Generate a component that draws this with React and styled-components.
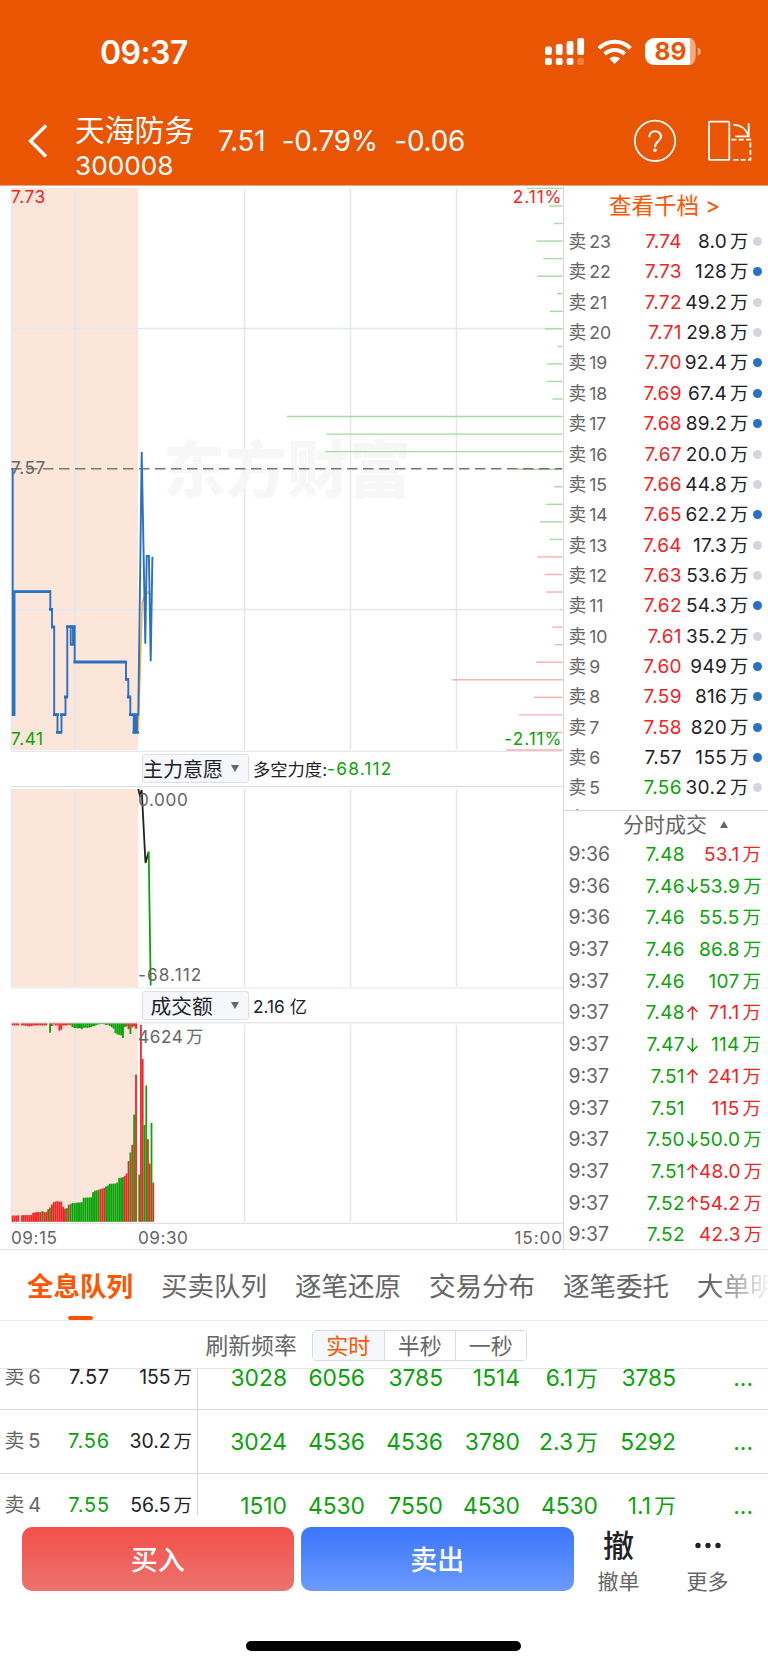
import React from 'react';
import styled, { createGlobalStyle } from 'styled-components';

const RED = '#f52223';
const GREEN = '#0aa30a';
const DARK = '#222226';
const GREY = '#666';
const BLUE = '#2a70c4';
const ORANGE = '#ff5500';
const GRID = '#e3e7ef';
const FONT = '"Inter", "Noto Sans CJK SC", sans-serif';

const GlobalStyle = createGlobalStyle`
  * {
    box-sizing: border-box;
  }
  body {
    margin: 0;
    background: #fff;
    font-family: ${FONT};
    color: ${DARK};
  }
`;

const Screen = styled.div`
  width: 768px;
  height: 1665px;
  overflow: hidden;
  display: flex;
  flex-direction: column;
  background: #fff;
`;

const Header = styled.header`
  height: 186px;
  flex: none;
  background: #ea5504;
  border-bottom: 1px solid #e3a88c;
  color: #fff;
`;

const StatusBar = styled.div`
  display: flex;
  align-items: center;
  justify-content: space-between;
  height: 104px;
  padding: 0 66px 0 100px;
`;

const Clock = styled.div`
  font-size: 32px;
  font-weight: 600;
  letter-spacing: -0.6px;
`;

const StatusIcons = styled.svg`
  display: block;
  width: 158px;
  height: 30px;
`;

const TitleBar = styled.div`
  display: flex;
  align-items: center;
  height: 74px;
  padding-left: 28px;
  padding-right: 16px;
`;

const BackIcon = styled.svg`
  width: 20px;
  height: 34px;
`;

const StockName = styled.div`
  width: 143px;
  margin-left: 27px;
  padding-top: 13px;
  font-size: 29.8px;
  line-height: 36px;
  white-space: nowrap;
`;

const StockCode = styled.div`
  font-size: 26.2px;
  line-height: 35px;
`;

const Quote = styled.div`
  display: flex;
  flex: 1;
  gap: 16.5px;
  font-size: 27.8px;
  letter-spacing: -0.2px;
`;

const HeaderIcons = styled.svg`
  width: 120px;
  height: 44px;
`;

const Market = styled.main`
  display: flex;
  height: 1064px;
  flex: none;
  border-bottom: 1px solid #e0e0e3;
`;

const Charts = styled.section`
  width: 564px;
  flex: none;
  display: flex;
  flex-direction: column;
  border-right: 1px solid #d4d7dd;
`;

const Chart = styled.svg`
  display: block;
  flex: none;
  width: 563px;
  height: ${(props) => props.$height}px;

  text {
    font-family: ${FONT};
    font-size: 17.2px;
    letter-spacing: 0.6px;
  }
`;

const IndicatorBar = styled.div`
  display: flex;
  align-items: center;
  height: 34px;
  padding-left: 142px;
  font-size: 17.3px;
  white-space: nowrap;
`;

const IndicatorSelect = styled.div`
  display: flex;
  align-items: center;
  justify-content: space-between;
  width: 107px;
  height: 29px;
  margin-right: 4px;
  padding: 0 9px 0 ${(props) => props.$indent}px;
  border: 1px solid #dcdfe5;
  border-radius: 3px;
  background: #f5f7fa;
  font-size: ${(props) => props.$size || 20}px;
`;

const Caret = styled.span`
  width: 0;
  height: 0;
  border: 4.5px solid transparent;
  ${(props) => (props.$up ? 'border-top-width: 0' : 'border-bottom-width: 0')};
  border-${(props) => (props.$up ? 'bottom' : 'top')}: 7px solid ${GREY};
`;

const Tinted = styled.span`
  color: ${(props) => props.$color};
  letter-spacing: 1.2px;
`;

const TimeAxis = styled.div`
  display: flex;
  height: 25px;
  padding: 0 0 0 11px;
  font-size: 17.2px;
  line-height: 27px;
  letter-spacing: 0.5px;
  color: ${GREY};

  span:first-child {
    width: 127px;
  }
  span:last-child {
    margin-left: auto;
    letter-spacing: 0.9px;
  }
`;

const SidePanel = styled.aside`
  flex: 1;
  min-width: 0;
`;

const DepthLink = styled.div`
  height: 40px;
  padding: 2px 0 0 45px;
  font-size: 22.5px;
  line-height: 36px;
  color: ${ORANGE};
`;

const DepthList = styled.div`
  height: 585px;
  overflow: hidden;
  border-bottom: 1px solid #d4d7dd;
`;

const DepthRow = styled.div`
  display: grid;
  grid-template-columns: 50px 63.5px 66.5px 1fr;
  align-items: center;
  height: 30.36px;
  padding-left: 4.5px;
  font-size: 19px;
  line-height: 31px;
  white-space: nowrap;
`;

const Level = styled.span`
  font-size: ${(props) => props.$size || 17.7}px;
  color: ${GREY};
  word-spacing: -2px;
`;

const Price = styled.span`
  color: ${(props) => props.$color};
  text-align: right;
  letter-spacing: 0.4px;
`;

const Amount = styled.span`
  color: ${(props) => props.$color || DARK};
  text-align: right;
  letter-spacing: 0.3px;
`;

const Unit = styled.span`
  margin-left: 3px;
  font-size: ${(props) => props.$size || 18.4}px;
  line-height: 1;
  letter-spacing: 0;
`;

const Dot = styled.i`
  width: 9px;
  height: 9px;
  margin-left: 4px;
  border-radius: 50%;
  background: ${(props) => (props.$active ? BLUE : '#d3d6de')};
`;

const TradesTitle = styled.div`
  display: flex;
  align-items: center;
  gap: 13px;
  height: 27px;
  padding-left: 59px;
  font-size: 21px;
  line-height: 27px;
  color: ${GREY};
`;

const TradeRow = styled.div`
  display: grid;
  grid-template-columns: 60px 56.5px 14px 62px;
  align-items: center;
  height: 31.7px;
  padding-left: 4.5px;
  font-size: 19px;
  line-height: 33px;
  white-space: nowrap;
`;

const ArrowIcon = styled.svg`
  display: block;
  width: 13px;
  height: 16px;
  margin-left: 0.5px;
  overflow: visible;
`;

const Tabs = styled.nav`
  display: flex;
  flex: none;
  gap: 28px;
  height: 71px;
  padding-left: 27px;
  overflow: hidden;
  border-bottom: 1px solid #e9ebf1;
`;

const Tab = styled.div`
  display: flex;
  flex: none;
  flex-direction: column;
  align-items: center;
  justify-content: space-between;
  width: 106px;
  padding-top: 16px;
  font-size: 26.5px;
  line-height: 40px;
  font-weight: ${(props) => (props.$active ? 600 : 400)};
  color: ${(props) => (props.$active ? ORANGE : GREY)};
  white-space: nowrap;

  &::after {
    content: '';
    width: 25px;
    height: 4px;
    border-radius: 2px;
    background: ${(props) => (props.$active ? ORANGE : 'transparent')};
  }

  &:last-child {
    mask-image: linear-gradient(90deg, #000 12px, transparent 76px);
  }
`;

const RefreshBar = styled.div`
  display: flex;
  align-items: center;
  flex: none;
  height: 48px;
  padding-left: 205.5px;
  border-bottom: 1px solid #e4e6eb;
  font-size: 22.8px;
  color: ${GREY};
`;

const Segments = styled.div`
  display: flex;
  height: 31px;
  margin-top: 1px;
  margin-left: 15.5px;
  border: 1px solid #d9dce3;
  border-radius: 4px;
  overflow: hidden;
`;

const Segment = styled.div`
  width: 71px;
  padding-right: 1px;
  font-size: 22px;
  line-height: 30px;
  text-align: center;
  background: ${(props) => (props.$active ? '#f5f7fa' : '#fff')};
  color: ${(props) => (props.$active ? ORANGE : GREY)};

  & + & {
    border-left: 1px solid #d9dce3;
  }
`;

// The list is scrolled part way through its first row
const QueueTable = styled.div`
  display: flex;
  flex-direction: column;
  justify-content: flex-start;
  height: 146px;
  flex: none;
  overflow: hidden;
`;

const QueueRow = styled.div`
  display: grid;
  flex: none;
  grid-template-columns: 50px 60px 88px 89px 78px 78px 77px 78px 78px 77px;
  height: 64px;
  border-bottom: 1px solid #d9dbe1;
  font-size: 22.8px;
  line-height: 63px;
  white-space: nowrap;

  &:first-child {
    margin-top: -23px;
  }
`;

const QueueCell = styled.div`
  text-align: right;
  color: ${GREEN};
`;

const QueueLevel = styled(QueueCell)`
  padding-left: 4.5px;
  text-align: left;
  font-size: 20px;
  color: ${GREY};
  word-spacing: -2px;
`;

const QueuePrice = styled(QueueCell)`
  font-size: 20px;
  letter-spacing: 0.8px;
  color: ${(props) => props.$color};
`;

const QueueAmount = styled(QueueCell)`
  padding-right: 5px;
  border-right: 1px solid #d3d6dc;
  font-size: 19.4px;
  color: ${DARK};
`;

const ActionBar = styled.footer`
  display: flex;
  align-items: flex-start;
  flex: none;
  height: 88px;
  padding: 12px 12px 0 21.5px;
`;

const TradeButton = styled.button`
  width: 272.5px;
  height: 64px;
  margin-right: 7px;
  padding: 0 0 2px;
  border: 0;
  border-radius: 10px;
  background: ${(props) => props.$fill};
  color: #fff;
  font-family: ${FONT};
  font-size: 27px;
  font-weight: 500;
`;

const ToolButton = styled.div`
  display: flex;
  flex-direction: column;
  align-items: center;
  width: 89px;
  margin-left: ${(props) => props.$offset || 0}px;
  font-size: 21px;
  line-height: 30px;
  color: ${GREY};
`;

const ToolMark = styled.div`
  height: 40px;
  font-size: 31px;
  line-height: 37px;
  font-weight: 500;
  color: ${DARK};
`;

const HomeIndicator = styled.div`
  width: 275px;
  height: 10px;
  margin: 38px auto 0 246px;
  border-radius: 5px;
  background: #000;
`;

const asks = [
  ['23', '7.74', '8.0', false],
  ['22', '7.73', '128', true],
  ['21', '7.72', '49.2', false],
  ['20', '7.71', '29.8', false],
  ['19', '7.70', '92.4', true],
  ['18', '7.69', '67.4', true],
  ['17', '7.68', '89.2', true],
  ['16', '7.67', '20.0', false],
  ['15', '7.66', '44.8', false],
  ['14', '7.65', '62.2', true],
  ['13', '7.64', '17.3', false],
  ['12', '7.63', '53.6', false],
  ['11', '7.62', '54.3', true],
  ['10', '7.61', '35.2', false],
  ['9', '7.60', '949', true],
  ['8', '7.59', '816', true],
  ['7', '7.58', '820', true],
  ['6', '7.57', '155', true],
  ['5', '7.56', '30.2', false],
  ['4', '7.55', '56.5', false],
];

// time, price, tick direction, amount, bought
const trades = [
  ['9:36', '7.48', '', '53.1', true],
  ['9:36', '7.46', 'down', '53.9', false],
  ['9:36', '7.46', '', '55.5', false],
  ['9:37', '7.46', '', '86.8', false],
  ['9:37', '7.46', '', '107', false],
  ['9:37', '7.48', 'up', '71.1', true],
  ['9:37', '7.47', 'down', '114', false],
  ['9:37', '7.51', 'up', '241', true],
  ['9:37', '7.51', '', '115', true],
  ['9:37', '7.50', 'down', '50.0', false],
  ['9:37', '7.51', 'up', '48.0', true],
  ['9:37', '7.52', 'up', '54.2', true],
  ['9:37', '7.52', '', '42.3', true],
];

const queue = [
  ['6', '7.57', '155', ['3028', '6056', '3785', '1514', '6.1万', '3785']],
  ['5', '7.56', '30.2', ['3024', '4536', '4536', '3780', '2.3万', '5292']],
  ['4', '7.55', '56.5', ['1510', '4530', '7550', '4530', '4530', '1.1万']],
];

const tabs = ['全息队列', '买卖队列', '逐笔还原', '交易分布', '逐笔委托', '大单明细'];

// left ends of the order book lines, top price first
const depthLines = [
  526.7, 548.7, 554, 536.3, 543.3, 537.3, 557, 550, 544.7, 557.7, 547, 547, 552.3,
  287, 326.3, 325.3, 517.3, 554, 546.3, 540, 550, 537.3, 544.7, 546.3, 560.7, 552.3,
  555, 536.3, 452.3, 534, 519, 533, 506,
];

// call auction bars, negative means green
const auctionBars = [
  6.3, 6.3, 6.3, 6.5, 0, 6.5, 6.7, 6.7, 6.7, 6.7, 7, 9, 9.3, 9.7, 9.7, 9.7, -10.7, 9.7,
  9.7, 12.5, -14.3, 17.3, 19.7, 20.3, 20.7, 20, 20.3, 15, 13, -13.7, 17, -17.8, -18.7,
  -18.7, -19, -19.3, -19.3, -19.6, -24, -24.2, -24.3, -24.3, -24.5, -29.7, -31, -31.5,
  -32, 32.7, 33.2, 33.8, -35.3, -36.3, -38, -38, -38.2, -38.3, -39.3, -43.7, -44.2,
  -44.6, 46, 48.3, 60.7, -69.5, 77, -107.3, 147.3,
];

const unmatchedBars = [
  2, 2, 2, 2, 0, 2, 2, 2.3, 2.6, 3, 2.6, 2.2, 2, 2, 2, 2, -2.2, 2, 2, 0, -9.3, 2.6, 1,
  2, 2, 7.3, 6.3, 2, 2, 2, 1.5, 2, -3.8, -4.6, -4.6, -5, -4.8, -5.8, -4.6, -4.2, -4.6,
  -4, -3.7, -2.7, -2.3, -1.6, -1, -0.8, -0.7, 1, -1.6, 1.3, -2.6, -3.8, -5.3, -9.6,
  -11, -11.5, -12, -14.6, -3.5, 3, 5.8, -10.6, 4, 3, 5.5,
];

const minuteBars = [-47.3, 197, 162.7, -97, -136.3, 82.7, 58.3, -99, 39.3];

function Grid({ top, bottom }) {
  return (
    <>
      <rect x="12" y={top} width="126" height={bottom - top} fill="#fce6da" />
      <path
        d={[75, 244.5, 350.5, 456.5].map((x) => `M${x} ${top}V${bottom}`).join('') + `M11.5 ${top}V${bottom}`}
        stroke={GRID}
        strokeWidth="1.5"
        fill="none"
      />
    </>
  );
}

function PriceChart() {
  return (
    <Chart $height={566} viewBox="0 186 563 566">
      <Grid top={188} bottom={750} />
      <path d="M12 328.5H562M12 609.5H562M11 751.5H562" stroke={GRID} strokeWidth="1.3" fill="none" />
      <text x="163" y="493" fill="#f7f7f8" style={{ fontSize: 62, fontWeight: 900, letterSpacing: 0 }}>东方财富</text>
      {depthLines.map((x, i) => (
        <path key={i} d={`M${x} ${188.4 + i * 17.55}H562.5`} stroke={i < 21 ? '#a3dca3' : '#f9b0b0'} strokeWidth="1.4" />
      ))}
      <path d="M11 468.7H562" stroke="#777" strokeWidth="1.6" strokeDasharray="10.5 5.5" />
      <text x="11" y="203" fill={RED}>7.73</text>
      <text x="562.5" y="203" fill={RED} textAnchor="end" style={{ letterSpacing: 1 }}>2.11%</text>
      <text x="11" y="474" fill={GREY}>7.57</text>
      <text x="11" y="745" fill={GREEN}>7.41</text>
      <text x="562.5" y="745" fill={GREEN} textAnchor="end" style={{ letterSpacing: 1 }}>-2.11%</text>
      <path
        d="M138.3 730L142.3 601.7L144.3 596.7L148.7 592L151.7 596.7"
        stroke="#fbb321" strokeWidth="1.5" fill="none"
      />
      <g stroke={BLUE} fill="none">
        <path
          d="M12.7 468.5V714.7H14.5V591.7H50.3V609.3H52V627H54.2V714.7H57.5V732.3H61.5V714.7H65.5V697H67.3V626.7H70.7V644.3V626.7H73V644.3V626.7H74.7V662H126V679.3H128.3V697H130.3V714.7H133.7V732.3H135.3V714.7H137V732.3V714.7H138.3L141.7 452L145.3 643.7L146.7 556H148.9L150.7 661.3L152.4 556.7"
          strokeWidth="1.9"
        />
        <path
          d="M12 714.7H15M13 591.7H51M49 609.3H53M51 627H55M53 714.7H59M56 732.3H62M60 714.7H66M64 697H68M66 626.7H75.5M70 644.3H74M73.5 662H126.5M125 679.3H129M127 697H131M129 714.7H138.5M132.5 732.3H139"
          strokeWidth="2.8"
        />
      </g>
    </Chart>
  );
}

function IntentChart() {
  return (
    <Chart $height={203} viewBox="0 786 563 203">
      <Grid top={789} bottom={987} />
      <path d="M11 786.5H563" stroke="#d9dce3" />
      <path d="M11 988H563" stroke={GRID} />
      <path d="M138.3 789L139.7 795L141.7 790L145.5 863L148.7 851.7" stroke="#222" strokeWidth="1.8" fill="none" />
      <path d="M148.7 851.7L150.7 985.5" stroke={GREEN} strokeWidth="1.8" />
      <text x="138" y="806" fill={GREY}>0.000</text>
      <text x="138" y="981" fill={GREY} style={{ letterSpacing: 1.1 }}>-68.112</text>
    </Chart>
  );
}

function VolumeChart() {
  const color = (v) => (v < 0 ? GREEN : RED);
  return (
    <Chart $height={202} viewBox="0 1022 563 202">
      <Grid top={1025} bottom={1222} />
      <path d="M11 1022.8H563M11 1223.3H563" stroke="#d9dce3" />
      {auctionBars.map((v, i) => (
        <rect key={i} x={11.7 + i * 1.87} y={1221.8 - Math.abs(v)} width="1.8" height={Math.abs(v)} fill={color(v)} />
      ))}
      {unmatchedBars.map((v, i) => (
        <rect key={i} x={11.7 + i * 1.87} y="1023.4" width="1.87" height={Math.abs(v)} fill={color(v)} />
      ))}
      {minuteBars.map((v, i) => (
        <rect key={i} x={138.3 + i * 1.76} y={1221.8 - Math.abs(v)} width="1.76" height={Math.abs(v)} fill={color(v)} />
      ))}
      <text x="138" y="1042.5" fill={GREY} wordSpacing="-3">4624 万</text>
    </Chart>
  );
}

function Arrow({ direction }) {
  if (!direction) return <span />;
  const up = direction === 'up';
  return (
    <ArrowIcon viewBox="0 0 13 16" fill="none" stroke={up ? RED : GREEN} strokeWidth="1.6">
      <path d={up ? 'M6.5 15V2M1.5 7L6.5 1.8L11.5 7' : 'M6.5 1V14M1.5 9L6.5 14.2L11.5 9'} />
    </ArrowIcon>
  );
}

function priceColor(price) {
  if (price === '7.57') return DARK;
  return price > '7.57' ? RED : GREEN;
}

class App extends React.Component {
  renderHeader() {
    return (
      <Header>
        <StatusBar>
          <Clock>09:37</Clock>
          <StatusIcons viewBox="544 37 158 30">
            <g fill="#fff">
              <rect x="545" y="46.5" width="6.8" height="8.5" rx="2" />
              <rect x="555.8" y="44" width="6.8" height="11" rx="2" />
              <rect x="566.6" y="41" width="6.8" height="14" rx="2" />
              <rect x="577.3" y="38" width="6.8" height="17" rx="2" />
              <rect x="545" y="58" width="6.8" height="7" rx="2" />
              <rect x="555.8" y="58" width="6.8" height="7" rx="2" />
              <rect x="566.6" y="58" width="6.8" height="7" rx="2" />
              <rect x="577.3" y="58" width="6.8" height="7" rx="2" opacity="0.25" />
              <path d="M614.7 64L609.3 58.6Q614.7 54.2 620.1 58.6Z" />
            </g>
            <g fill="none" stroke="#fff" strokeWidth="4">
              <path d="M599 48.3C607.8 39.6 621.6 39.6 630.4 48.3" />
              <path d="M604.6 54C610.4 48.6 619 48.6 624.8 54" />
            </g>
            <path d="M654 38H690V65H654A9 9 0 0 1 645 56V47A9 9 0 0 1 654 38Z" fill="#fff" />
            <path d="M690 38A6 9 0 0 1 695.7 47V56A6 9 0 0 1 690 65Z" fill="#fff" opacity="0.5" />
            <path d="M697.7 47.5Q700.8 48.5 700.8 51.5T697.7 55.5Z" fill="#fff" opacity="0.5" />
            <text x="670.5" y="60.3" textAnchor="middle" fill="#ea5504" fontSize="24.5" fontWeight="700">89</text>
          </StatusIcons>
        </StatusBar>
        <TitleBar>
          <BackIcon viewBox="28 124 20 34" fill="none" stroke="#fff" strokeWidth="3.4">
            <path d="M46 125.5L30.5 141L46 156.5" />
          </BackIcon>
          <StockName>
            天海防务
            <StockCode>300008</StockCode>
          </StockName>
          <Quote>
            <span>7.51</span>
            <span>-0.79%</span>
            <span>-0.06</span>
          </Quote>
          <HeaderIcons viewBox="632 119 120 44" fill="none" stroke="#fff" strokeWidth="1.8">
            <circle cx="655" cy="140.8" r="20.2" />
            <path d="M649.2 137.3C649.2 129.3 661 129.3 661 136.8C661 141.5 655 141.2 655 146.5V147.3" strokeWidth="2.1" />
            <circle cx="655" cy="150.3" r="1.8" fill="#fff" stroke="none" />
            <rect x="709" y="121.7" width="20.3" height="38.2" rx="1" />
            <path d="M733.5 124.7C741 125.3 746.5 129.5 748.3 136M748.7 123.2V136.4H735.3" />
            <path d="M731.5 139.6H750.4V159.8H731.5" strokeDasharray="5 2.3" />
          </HeaderIcons>
        </TitleBar>
      </Header>
    );
  }

  renderCharts() {
    return (
      <Charts>
        <PriceChart />
        <IndicatorBar>
          <IndicatorSelect $indent={0}>主力意愿<Caret /></IndicatorSelect>
          多空力度:<Tinted $color={GREEN}>-68.112</Tinted>
        </IndicatorBar>
        <IntentChart />
        <IndicatorBar>
          <IndicatorSelect $indent={7.5} $size={20.7}>成交额<Caret /></IndicatorSelect>
          2.16 亿
        </IndicatorBar>
        <VolumeChart />
        <TimeAxis>
          <span>09:15</span>
          <span>09:30</span>
          <span>15:00</span>
        </TimeAxis>
      </Charts>
    );
  }

  renderSidePanel() {
    return (
      <SidePanel>
        <DepthLink>查看千档 &gt;</DepthLink>
        <DepthList>
          {asks.map(([level, price, amount, active]) => (
            <DepthRow key={level}>
              <Level>卖 {level}</Level>
              <Price $color={priceColor(price)}>{price}</Price>
              <Amount>{amount}<Unit>万</Unit></Amount>
              <Dot $active={active} />
            </DepthRow>
          ))}
        </DepthList>
        <TradesTitle>分时成交<Caret $up /></TradesTitle>
        {trades.map(([time, price, direction, amount, bought], i) => (
          <TradeRow key={i}>
            <Level $size={19.4}>{time}</Level>
            <Price $color={GREEN}>{price}</Price>
            <Arrow direction={direction} />
            <Amount $color={bought ? RED : GREEN}>{amount}<Unit>万</Unit></Amount>
          </TradeRow>
        ))}
      </SidePanel>
    );
  }

  renderOrder(order) {
    if (!order.endsWith('万')) return order;
    return <>{order.slice(0, -1)}<Unit $size={22}>万</Unit></>;
  }

  renderQueue() {
    return (
      <QueueTable>
        {queue.map(([level, price, amount, orders]) => (
          <QueueRow key={level}>
            <QueueLevel>卖 {level}</QueueLevel>
            <QueuePrice $color={priceColor(price)}>{price}</QueuePrice>
            <QueueAmount>{amount}<Unit>万</Unit></QueueAmount>
            {orders.map((order, i) => <QueueCell key={i}>{this.renderOrder(order)}</QueueCell>)}
            <QueueCell>...</QueueCell>
          </QueueRow>
        ))}
      </QueueTable>
    );
  }

  render() {
    return (
      <Screen>
        <GlobalStyle />
        {this.renderHeader()}
        <Market>
          {this.renderCharts()}
          {this.renderSidePanel()}
        </Market>
        <Tabs>
          {tabs.map((tab, i) => <Tab key={tab} $active={i === 0}>{tab}</Tab>)}
        </Tabs>
        <RefreshBar>
          刷新频率
          <Segments>
            <Segment $active>实时</Segment>
            <Segment>半秒</Segment>
            <Segment>一秒</Segment>
          </Segments>
        </RefreshBar>
        {this.renderQueue()}
        <ActionBar>
          <TradeButton $fill="linear-gradient(#f4504a, #ec726d)">买入</TradeButton>
          <TradeButton $fill="linear-gradient(#3a76fb, #6c9aff)">卖出</TradeButton>
          <ToolButton $offset={-6.5}><ToolMark>撤</ToolMark>撤单</ToolButton>
          <ToolButton>
            <ToolMark>
              <svg width="28" height="38" viewBox="0 0 28 38" fill={DARK}>
                <circle cx="4" cy="18.5" r="2.7" />
                <circle cx="14" cy="18.5" r="2.7" />
                <circle cx="24" cy="18.5" r="2.7" />
              </svg>
            </ToolMark>
            更多
          </ToolButton>
        </ActionBar>
        <HomeIndicator />
      </Screen>
    );
  }
}

export default App;
